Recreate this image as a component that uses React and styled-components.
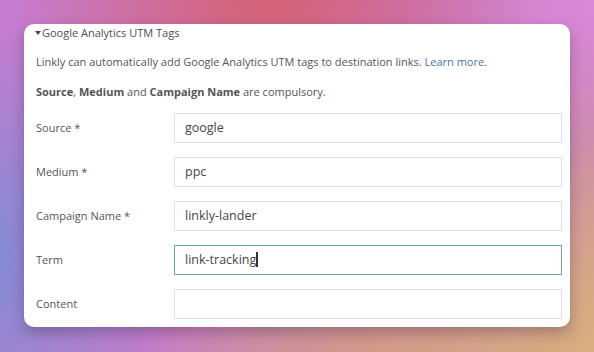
import React from "react";
import styled, { createGlobalStyle } from "styled-components";

const Global = createGlobalStyle`
  html, body { margin: 0; padding: 0; }
  body {
    width: 594px;
    height: 352px;
    overflow: hidden;
    font-family: "Open Sans", "Liberation Sans", sans-serif;
  }
`;

const Backdrop = styled.div`
  width: 594px;
  height: 352px;
  box-sizing: border-box;
  padding: 24px 24px 0 24px;
  background:
    radial-gradient(ellipse 260px 200px at 270px -20px, #d65f6c 0%, rgba(214,95,108,0) 100%),
    radial-gradient(ellipse 260px 220px at 620px 360px, #d9b07c 0%, rgba(217,176,124,0) 100%),
    radial-gradient(ellipse 220px 200px at 380px 370px, #d49a86 0%, rgba(212,154,134,0) 100%),
    radial-gradient(ellipse 200px 240px at -20px 260px, #7f8bd6 0%, rgba(127,139,214,0) 100%),
    radial-gradient(ellipse 200px 150px at 600px 0px, #da88d8 0%, rgba(218,136,216,0) 100%),
    linear-gradient(135deg, #c67ccf 0%, #c77bc9 50%, #d29c90 100%);
`;

const Card = styled.section`
  width: 546px;
  height: 303px;
  box-sizing: border-box;
  background: #fff;
  border-radius: 10px;
  box-shadow: 0 6px 14px rgba(60, 40, 70, 0.35);
  padding: 1px 8px 0 11px;
  color: #555;
`;

const Summary = styled.div`
  display: flex;
  align-items: center;
  font-size: 11px;
  line-height: 15px;
  color: #4f4f4f;
  height: 15px;
`;

const Caret = styled.span`
  display: inline-block;
  width: 0;
  height: 0;
  border-left: 3.5px solid transparent;
  border-right: 3.5px solid transparent;
  border-top: 4px solid #444;
  margin-right: 1px;
  margin-top: 1px;
`;

const Body = styled.div`
  padding-left: 1px;
`;

const Para = styled.p`
  margin: 14px 0 0 0;
  font-size: 11px;
  line-height: 15px;
  color: #555;
  & + & { margin-top: 15px; }
  b { font-weight: 700; color: #555; }
`;

const Link = styled.a`
  color: #3f74b3;
  text-decoration: none;
`;

const Form = styled.div`
  display: flex;
  flex-direction: column;
  gap: 14px;
  margin-top: 14px;
`;

const Row = styled.label`
  display: grid;
  grid-template-columns: 138px 388px;
  align-items: center;
`;

const Label = styled.span`
  font-size: 11px;
  color: #555;
  padding-bottom: 2px;
`;

const Input = styled.div`
  box-sizing: border-box;
  height: 30px;
  border: 1px solid ${p => (p.$focus ? "#67ab94" : "#e2e2e2")};
  padding: 0 10px;
  display: flex;
  align-items: center;
  font-size: 12.5px;
  color: #454545;
  padding-bottom: 2px;
`;

const Cursor = styled.span`
  display: inline-block;
  width: 1.5px;
  height: 15px;
  background: #333;
  margin-left: 0px;
`;

const fields = [
  { label: "Source *", value: "google" },
  { label: "Medium *", value: "ppc" },
  { label: "Campaign Name *", value: "linkly-lander" },
  { label: "Term", value: "link-tracking", focus: true },
  { label: "Content", value: "" },
];

export default function App() {
  return (
    <>
      <Global />
      <Backdrop>
        <Card>
          <Summary>
            <Caret />
            Google Analytics UTM Tags
          </Summary>
          <Body>
            <Para>
              Linkly can automatically add Google Analytics UTM tags to destination links.{" "}
              <Link href="#">Learn more.</Link>
            </Para>
            <Para>
              <b>Source</b>, <b>Medium</b> and <b>Campaign Name</b> are compulsory.
            </Para>
            <Form>
              {fields.map(f => (
                <Row key={f.label}>
                  <Label>{f.label}</Label>
                  <Input $focus={f.focus}>
                    {f.value}
                    {f.focus && <Cursor />}
                  </Input>
                </Row>
              ))}
            </Form>
          </Body>
        </Card>
      </Backdrop>
    </>
  );
}
